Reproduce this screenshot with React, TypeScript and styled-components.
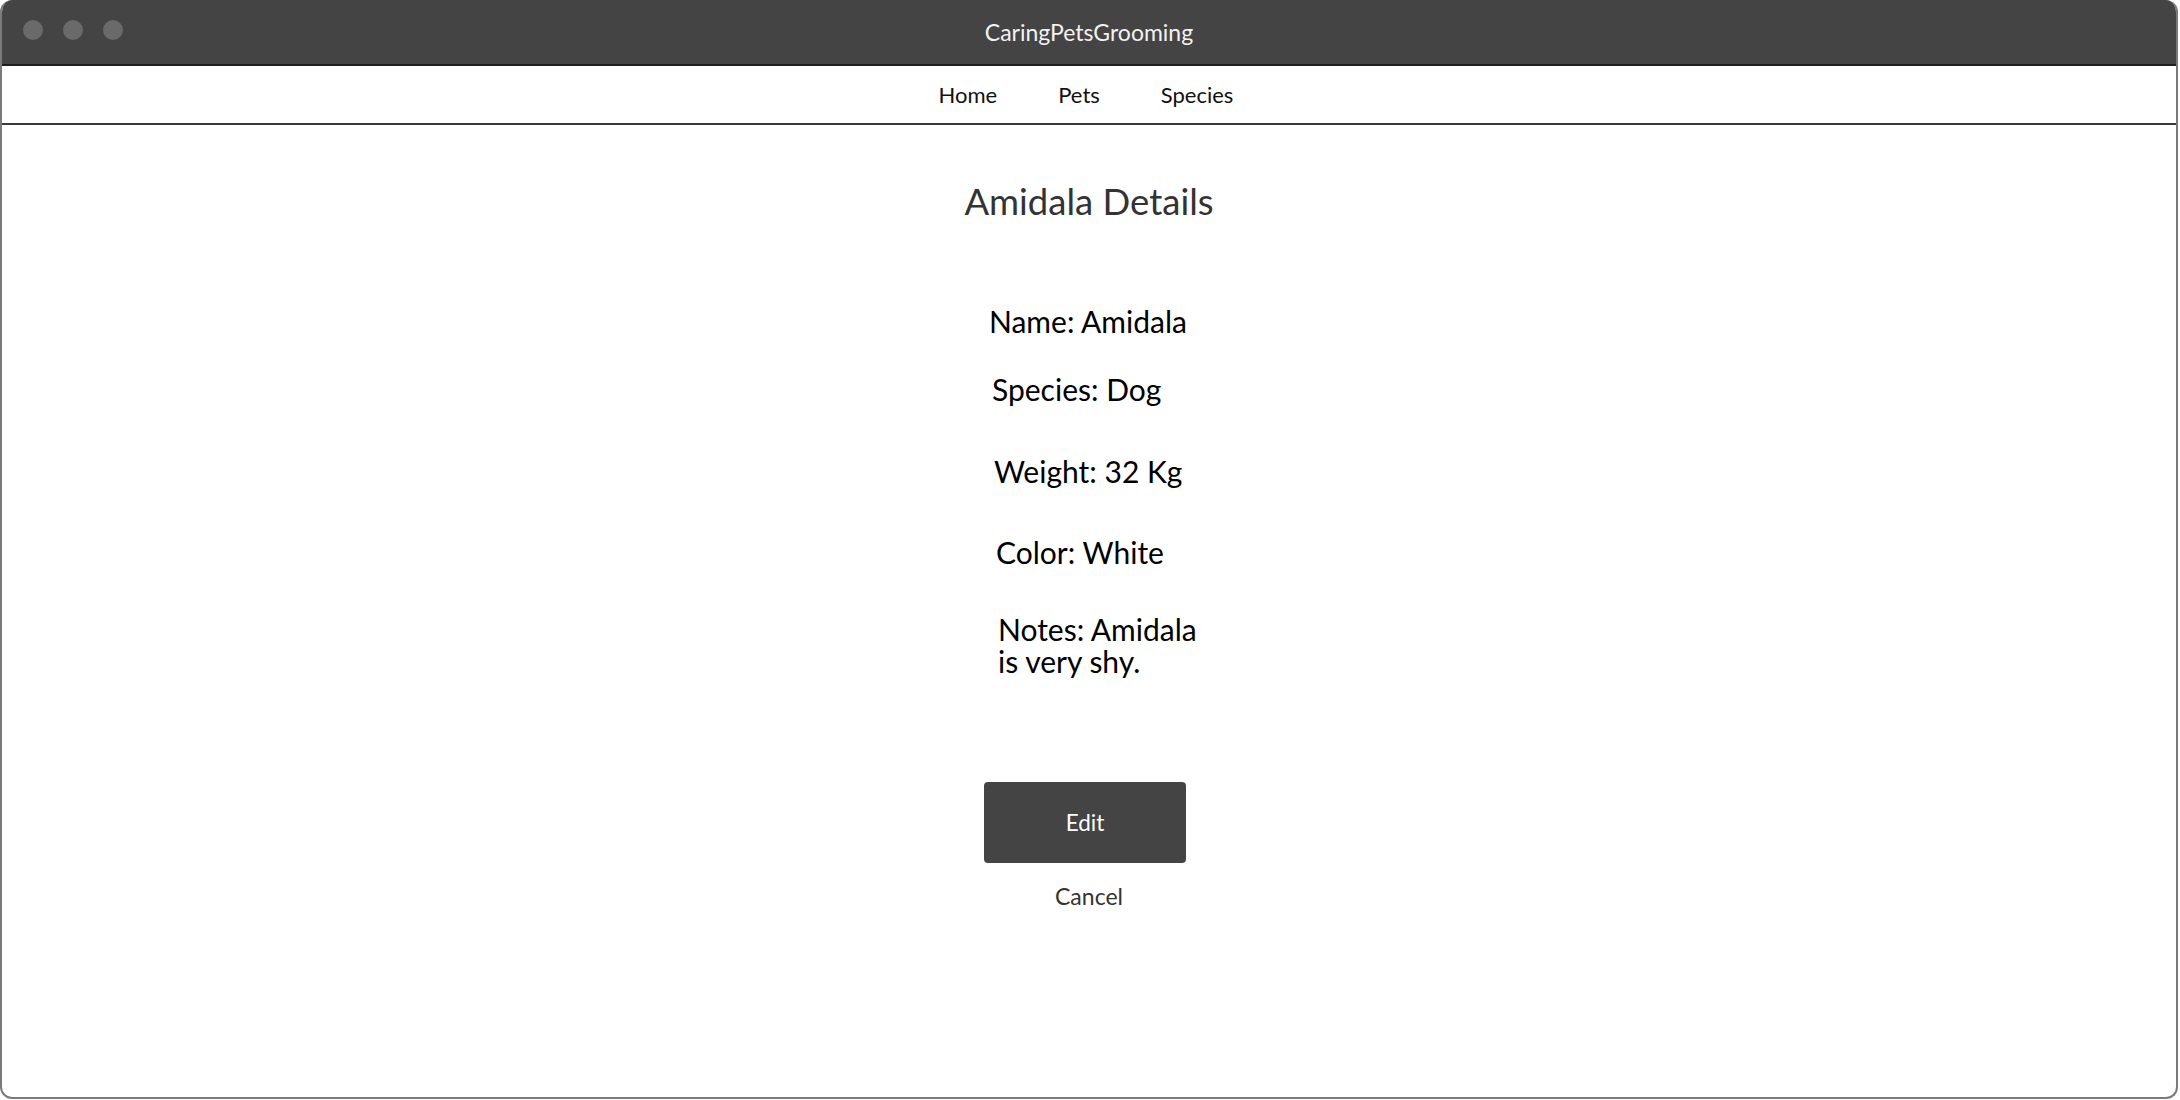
import * as React from 'react';
import styled, { createGlobalStyle } from 'styled-components';

const GlobalStyle = createGlobalStyle`
  html, body {
    margin: 0;
    padding: 0;
    background: #fff;
  }
  body {
    font-family: Lato, "Noto Sans", "Liberation Sans", sans-serif;
  }
`;

const Window = styled.div`
  box-sizing: border-box;
  width: 2178px;
  height: 1099px;
  border: 2px solid #7b7b7b;
  border-top: none;
  border-radius: 12px;
  overflow: hidden;
  display: flex;
  flex-direction: column;
  background: #fff;
`;

const TitleBar = styled.header`
  position: relative;
  height: 64px;
  flex: none;
  background: #444;
  display: flex;
  align-items: center;
  justify-content: center;
  color: #f2f2f2;
  font-size: 23px;
  margin: 0 -2px;
`;

const Dots = styled.div`
  position: absolute;
  left: 23px;
  top: 20px;
  display: flex;
  gap: 20px;
`;

const Dot = styled.span`
  width: 20px;
  height: 20px;
  border-radius: 50%;
  background: #6a6a6a;
`;

const Nav = styled.nav`
  flex: none;
  height: 57px;
  border-top: 2px solid #1e1e1e;
  border-bottom: 2px solid #3a3a3a;
  display: flex;
  align-items: center;
  justify-content: center;
  gap: 61px;
  padding-right: 6px;
  font-size: 22px;
  color: #111;
`;

const NavLink = styled.a`
  color: inherit;
  text-decoration: none;
  cursor: pointer;
`;

const Content = styled.main`
  flex: 1;
  display: flex;
  flex-direction: column;
  align-items: center;
`;

const Heading = styled.h1`
  margin: 53px 0 0;
  font-size: 36.5px;
  font-weight: 400;
  line-height: 46px;
  color: #333;
`;

const Details = styled.dl`
  margin: 81px 0 0;
  width: 200px;
  display: flex;
  flex-direction: column;
  color: #000;
  font-size: 30px;
  line-height: 32px;
`;

const Row = styled.div<{ $indent: number; $gap: number }>`
  margin-top: ${p => p.$gap}px;
  padding-left: ${p => p.$indent}px;
  white-space: pre;
`;

const Actions = styled.div`
  margin-top: 105px;
  display: flex;
  flex-direction: column;
  align-items: center;
`;

const EditButton = styled.button`
  width: 202px;
  height: 81px;
  margin-right: 8px;
  border: none;
  border-radius: 4px;
  background: #444;
  color: #fff;
  font-family: inherit;
  font-size: 22.5px;
  cursor: pointer;
`;

const CancelLink = styled.a`
  margin-top: 19px;
  font-size: 23px;
  color: #333;
  cursor: pointer;
`;

const details = [
  { text: 'Name: Amidala', indent: 0, gap: 0 },
  { text: 'Species: Dog', indent: 3, gap: 36 },
  { text: 'Weight: 32 Kg', indent: 5, gap: 50 },
  { text: 'Color: White', indent: 7, gap: 49 },
  { text: 'Notes: Amidala\nis very shy.', indent: 9, gap: 45 }
];

export default function App() {
  return (
    <>
      <GlobalStyle />
      <Window>
        <TitleBar>
          <Dots>
            <Dot />
            <Dot />
            <Dot />
          </Dots>
          CaringPetsGrooming
        </TitleBar>
        <Nav>
          <NavLink>Home</NavLink>
          <NavLink>Pets</NavLink>
          <NavLink>Species</NavLink>
        </Nav>
        <Content>
          <Heading>Amidala Details</Heading>
          <Details>
            {details.map(d => (
              <Row key={d.text} $indent={d.indent} $gap={d.gap}>
                {d.text}
              </Row>
            ))}
          </Details>
          <Actions>
            <EditButton>Edit</EditButton>
            <CancelLink>Cancel</CancelLink>
          </Actions>
        </Content>
      </Window>
    </>
  );
}
